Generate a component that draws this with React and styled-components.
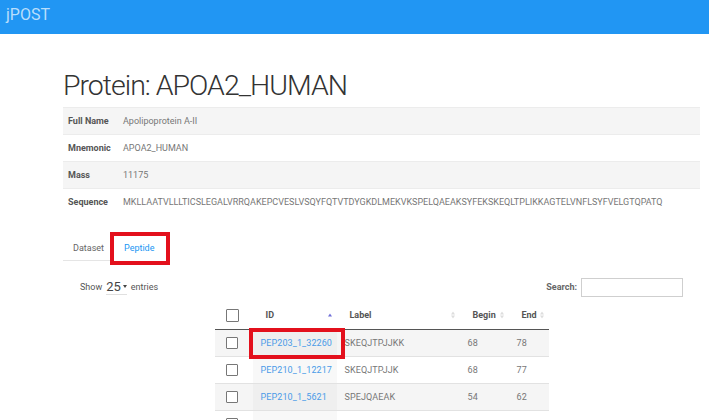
import styled, { createGlobalStyle } from "styled-components";

const GlobalStyle = createGlobalStyle`
  html, body {
    margin: 0;
    padding: 0;
    background: #ffffff;
    font-family: Roboto, "Liberation Sans", Arial, sans-serif;
  }
`;

const NavBar = styled.div`
  height: 34px;
  background-color: #2196f3;
  padding: 6px 0 0 6px;
  box-sizing: border-box;
`;

const Brand = styled.div`
  font-size: 16px;
  line-height: 18px;
  color: #b9defc;
`;

const Content = styled.div`
  padding: 0 9px 0 63px;
`;

const Title = styled.h1`
  margin: 35px 0 5px;
  font-size: 28.5px;
  line-height: 33px;
  font-weight: 300;
  letter-spacing: -1px;
  color: #333333;
`;

const InfoTable = styled.table`
  width: 100%;
  border-collapse: collapse;
  font-size: 9px;

  tr {
    height: 27px;
    border-top: 1px solid #ececec;
  }
  tr:nth-child(odd) {
    background-color: #f5f5f5;
  }
  th {
    width: 50px;
    padding: 0 0 0 5px;
    text-align: left;
    font-weight: 700;
    color: #555555;
  }
  td {
    padding: 0 0 0 5px;
    color: #777777;
  }
`;

const TabBar = styled.div`
  display: flex;
  margin-top: 20px;
  height: 25px;
`;

const Tab = styled.div`
  padding: 0 10px;
  line-height: 24px;
  font-size: 9px;
  color: ${(p) => (p.$active ? "#2196f3" : "#666666")};
  border-bottom: 1px solid ${(p) => (p.$active ? "transparent" : "#e5e5e5")};
  outline: ${(p) => (p.$marked ? "4px solid #e3101c" : "none")};
  min-width: ${(p) => (p.$active ? "32px" : "30px")};
`;

const Controls = styled.div`
  display: flex;
  justify-content: space-between;
  align-items: center;
  margin-top: 17px;
  padding: 0 17px;
  height: 19px;
  font-size: 9px;
  color: #555555;
`;

const Length = styled.div`
  display: flex;
  align-items: center;
  gap: 4px;
`;

const LengthSelect = styled.span`
  font-size: 13px;
  color: #444444;
  border-bottom: 1px solid #e0e0e0;
  line-height: 14px;
  padding-right: 6px;
  position: relative;

  &::after {
    content: "";
    position: absolute;
    right: 0;
    top: 5px;
    border-left: 2.5px solid transparent;
    border-right: 2.5px solid transparent;
    border-top: 3px solid #444444;
  }
`;

const SearchBox = styled.label`
  display: flex;
  align-items: center;
  gap: 4px;
  font-weight: 700;
  color: #666666;
`;

const SearchInput = styled.div`
  width: 100px;
  height: 17px;
  border: 1px solid #cfcfcf;
`;

const DataTable = styled.table`
  width: 334px;
  margin: 5px auto 0;
  border-collapse: collapse;
  font-size: 9px;
  table-layout: fixed;
`;

const HeadCell = styled.th`
  position: relative;
  height: 27px;
  padding: 0 0 0 13px;
  text-align: left;
  font-weight: 700;
  color: #555555;
  border-bottom: 1px solid #555555;
`;

const SortIcon = styled.span`
  position: absolute;
  right: 5px;
  top: 50%;
  transform: translateY(-50%);
  display: flex;
  flex-direction: column;
  gap: 1px;
`;

const Tri = styled.span`
  width: 0;
  height: 0;
  border-left: 2.5px solid transparent;
  border-right: 2.5px solid transparent;
  ${(p) =>
    p.$down
      ? `border-top: 3px solid ${p.$color};`
      : `border-bottom: 3px solid ${p.$color};`}
`;

const Row = styled.tr`
  height: 27px;
  background-color: ${(p) => (p.$odd ? "#f5f5f5" : "#ffffff")};
  border-top: 1px solid #e2e2e2;
`;

const Cell = styled.td`
  position: relative;
  padding: 0 0 0 8px;
  color: #777777;
  white-space: nowrap;
  letter-spacing: 0.1px;
  background-color: ${(p) => (p.$sorted ? (p.$odd ? "#efefef" : "#f8f8f8") : "transparent")};
`;

/* red annotation frame drawn over the first ID cell */
const Marker = styled.span`
  position: absolute;
  left: -4px;
  right: -8px;
  top: -2px;
  bottom: -3px;
  border: 4px solid #e3101c;
  pointer-events: none;
  z-index: 1;
`;

const LinkText = styled.span`
  color: #4a9be8;
`;

const CheckCell = styled.td`
  padding: 0 0 0 11px;
`;

const Check = styled.span`
  display: block;
  width: ${(p) => (p.$head ? "11px" : "10px")};
  height: ${(p) => (p.$head ? "11px" : "10px")};
  border: 1px solid #777777;
  border-radius: 1px;
  background: #ffffff;
`;

const rows = [
  { id: "PEP203_1_32260", label: "SKEQJTPJJKK", begin: 68, end: 78, marked: true },
  { id: "PEP210_1_12217", label: "SKEQJTPJJK", begin: 68, end: 77 },
  { id: "PEP210_1_5621", label: "SPEJQAEAK", begin: 54, end: 62 },
  { id: "", label: "", begin: "", end: "" },
];

function Sort({ active }) {
  if (active) {
    return (
      <SortIcon>
        <Tri $color="#6f6fd8" />
      </SortIcon>
    );
  }
  return (
    <SortIcon>
      <Tri $color="#dddddd" />
      <Tri $down $color="#dddddd" />
    </SortIcon>
  );
}

export default function App() {
  return (
    <>
      <GlobalStyle />
      <NavBar>
        <Brand>jPOST</Brand>
      </NavBar>
      <Content>
        <Title>Protein: APOA2_HUMAN</Title>
        <InfoTable>
          <tbody>
            <tr>
              <th>Full Name</th>
              <td>Apolipoprotein A-II</td>
            </tr>
            <tr>
              <th>Mnemonic</th>
              <td>APOA2_HUMAN</td>
            </tr>
            <tr>
              <th>Mass</th>
              <td>11175</td>
            </tr>
            <tr>
              <th>Sequence</th>
              <td>MKLLAATVLLLTICSLEGALVRRQAKEPCVESLVSQYFQTVTDYGKDLMEKVKSPELQAEAKSYFEKSKEQLTPLIKKAGTELVNFLSYFVELGTQPATQ</td>
            </tr>
          </tbody>
        </InfoTable>

        <TabBar>
          <Tab>Dataset</Tab>
          <Tab $active $marked>Peptide</Tab>
        </TabBar>

        <Controls>
          <Length>
            Show <LengthSelect>25</LengthSelect> entries
          </Length>
          <SearchBox>
            Search:
            <SearchInput />
          </SearchBox>
        </Controls>

        <DataTable>
          <colgroup>
            <col style={{ width: 38 }} />
            <col style={{ width: 84 }} />
            <col style={{ width: 123 }} />
            <col style={{ width: 49 }} />
            <col style={{ width: 40 }} />
          </colgroup>
          <thead>
            <tr>
              <HeadCell style={{ paddingLeft: 11 }}>
                <Check $head />
              </HeadCell>
              <HeadCell>
                ID
                <Sort active />
              </HeadCell>
              <HeadCell>
                Label
                <Sort />
              </HeadCell>
              <HeadCell>
                Begin
                <Sort />
              </HeadCell>
              <HeadCell>
                End
                <Sort />
              </HeadCell>
            </tr>
          </thead>
          <tbody>
            {rows.map((r, i) => (
              <Row key={i} $odd={i % 2 === 0}>
                <CheckCell>
                  <Check />
                </CheckCell>
                <Cell $sorted $odd={i % 2 === 0}>
                  <LinkText>{r.id}</LinkText>
                  {r.marked && <Marker />}
                </Cell>
                <Cell>{r.label}</Cell>
                <Cell>{r.begin}</Cell>
                <Cell>{r.end}</Cell>
              </Row>
            ))}
          </tbody>
        </DataTable>
      </Content>
    </>
  );
}
